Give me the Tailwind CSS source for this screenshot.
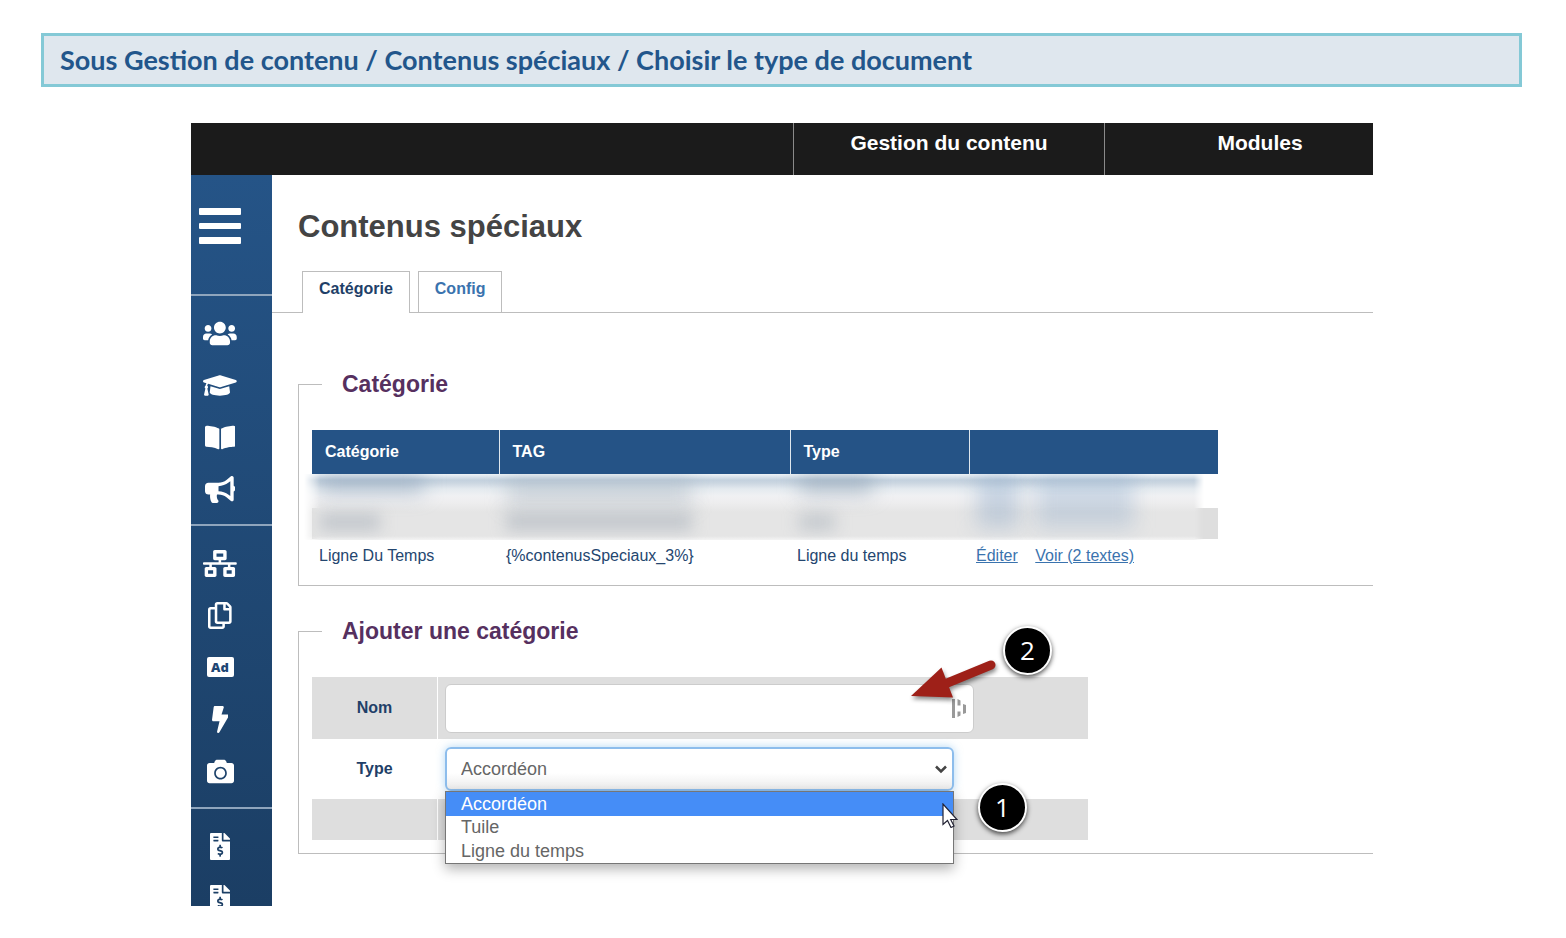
<!DOCTYPE html>
<html lang="fr">
<head>
    <meta charset="UTF-8">
    <meta name="viewport" content="width=device-width, initial-scale=1.0">
    <title>Contenus spéciaux</title>
    <script src="https://cdn.jsdelivr.net/npm/@tailwindcss/browser@4"></script>
</head>
<body class="bg-white font-['Liberation_Sans',Arial,sans-serif] text-base text-[#24466f] overflow-x-hidden">
    <h2 class="mt-[33px] ml-[41px] mr-[44px] h-[54px] flex items-center px-4 pb-px border-3 border-[#84c9d6] bg-[#dfe7ee] font-['Lato',sans-serif] font-bold text-[27px] leading-8 text-[#22568b] whitespace-nowrap">Sous Gestion de contenu / Contenus spéciaux / Choisir le type de document</h2>

    <div class="mt-9 ml-[191px] mr-[193px] overflow-hidden">
        <!-- Top bar -->
        <nav class="h-[52px] bg-[#1b1b1b] flex overflow-hidden pl-[602px] text-white font-bold text-[21px] leading-[40px] text-center">
            <a href="#" class="w-[311px] shrink-0 border-l border-[#8a8a8a]">Gestion du contenu</a>
            <a href="#" class="w-[311px] shrink-0 border-l border-[#8a8a8a]">Modules</a>
        </nav>

        <div class="flex">
            <!-- Sidebar -->
            <aside class="w-[81px] shrink-0 contain-size overflow-hidden bg-linear-to-b from-[#255487] to-[#1b3e64] text-white">
                <button type="button" aria-label="Menu" class="flex w-full h-[121px] pt-[33px] pl-2 border-b-2 border-[#8fa5bd]">
                    <svg class="w-[42px] h-9" viewBox="0 0 42 36" fill="currentColor">
                        <rect width="42" height="7" rx="1"/><rect y="15" width="42" height="6" rx="1"/><rect y="29" width="42" height="7" rx="1"/>
                    </svg>
                </button>
                <div class="pt-[11px] pb-[9px] border-b-2 border-[#8fa5bd]">
                    <a href="#" aria-label="Utilisateurs" class="flex w-[58px] h-[52px] items-center justify-center">
                        <svg class="h-[27px]" viewBox="0 0 640 512" fill="currentColor"><path d="M96 224c35.3 0 64-28.7 64-64s-28.7-64-64-64-64 28.7-64 64 28.7 64 64 64zm448 0c35.3 0 64-28.7 64-64s-28.7-64-64-64-64 28.7-64 64 28.7 64 64 64zm32 32h-64c-17.6 0-33.5 7.1-45.1 18.6 40.3 22.1 68.9 62 75.1 109.4h66c17.7 0 32-14.3 32-32v-32c0-35.3-28.7-64-64-64zm-256 0c61.9 0 112-50.1 112-112S381.9 32 320 32 208 82.1 208 144s50.1 112 112 112zm76.8 32h-8.3c-20.8 10-43.9 16-68.5 16s-47.6-6-68.5-16h-8.3C179.6 288 128 339.6 128 403.2V432c0 26.5 21.5 48 48 48h288c26.5 0 48-21.5 48-48v-28.8c0-63.6-51.6-115.2-115.2-115.2zm-223.7-13.4C161.5 263.1 145.6 256 128 256H64c-35.3 0-64 28.7-64 64v32c0 17.7 14.3 32 32 32h65.9c6.3-47.4 34.9-87.3 75.2-109.4z"/></svg>
                    </a>
                    <a href="#" aria-label="Formations" class="flex w-[58px] h-[52px] items-center justify-center">
                        <svg class="h-[27px]" viewBox="0 0 640 512" fill="currentColor"><path d="M622.34 153.2L343.4 67.5c-15.2-4.67-31.6-4.67-46.79 0L17.66 153.2c-23.54 7.23-23.54 38.36 0 45.59l48.63 14.94c-10.67 13.19-17.23 29.28-17.88 46.9C38.78 266.15 32 276.11 32 288c0 10.78 5.68 19.85 13.86 25.65L20.33 428.53C18.11 438.52 25.71 448 35.94 448h56.11c10.24 0 17.84-9.48 15.62-19.47L82.14 313.65C90.32 307.85 96 298.78 96 288c0-11.57-6.47-21.25-15.66-26.87.76-15.02 8.44-28.3 20.69-36.72L296.6 284.5c9.06 2.78 26.44 6.25 46.79 0l278.95-85.7c23.55-7.24 23.55-38.36 0-45.6zM352.79 315.09c-28.53 8.76-52.84 3.92-65.59 0l-145.02-44.55L128 384c0 35.35 85.96 64 192 64s192-28.65 192-64l-14.18-113.47-145.03 44.56z"/></svg>
                    </a>
                    <a href="#" aria-label="Lectures" class="flex w-[58px] h-[52px] items-center justify-center">
                        <svg class="h-[27px]" viewBox="0 0 576 512" fill="currentColor"><path d="M542.22 32.05c-54.8 3.11-163.72 14.43-230.96 55.59-4.64 2.84-7.27 7.89-7.27 13.17v363.87c0 11.55 12.63 18.85 23.28 13.49 69.18-34.82 169.23-44.32 218.7-46.92 16.89-.89 30.02-14.43 30.02-30.66V62.75c.01-17.71-15.35-31.74-33.77-30.7zM264.73 87.64C197.5 46.48 88.58 35.17 33.78 32.05 15.36 31.01 0 45.04 0 62.75V400.6c0 16.24 13.13 29.78 30.02 30.66 49.49 2.6 149.59 12.11 218.77 46.95 10.62 5.35 23.21-1.94 23.21-13.46V100.63c0-5.29-2.62-10.14-7.27-12.99z"/></svg>
                    </a>
                    <a href="#" aria-label="Annonces" class="flex w-[58px] h-[52px] items-center justify-center">
                        <svg class="h-[27px]" viewBox="0 0 576 512" fill="currentColor"><path d="M576 240c0-23.63-12.95-44.04-32-55.12V32.01C544 23.26 537.02 0 512 0c-7.12 0-14.19 2.38-19.98 7.02l-85.03 68.03C364.28 109.19 310.66 128 256 128H64c-35.35 0-64 28.65-64 64v96c0 35.35 28.65 64 64 64h33.7c-1.39 10.48-2.18 21.14-2.18 32 0 39.77 9.26 77.35 25.56 110.94 5.19 10.69 16.52 17.06 28.4 17.06h74.28c26.05 0 41.69-29.84 25.9-50.56-16.4-21.52-26.15-48.36-26.15-77.44 0-11.11 1.62-21.79 4.41-32H256c54.66 0 108.28 18.81 150.98 52.95l85.03 68.03a32.023 32.023 0 0 0 19.98 7.02c24.92 0 32-22.78 32-32V295.13C563.05 284.04 576 263.63 576 240zm-96 141.42l-33.05-26.44C392.95 311.78 325.12 288 256 288v-96c69.12 0 136.95-23.78 190.95-66.98L480 98.58v282.84z"/></svg>
                    </a>
                </div>
                <div class="pt-[11px] pb-[10px] border-b-2 border-[#8fa5bd]">
                    <a href="#" aria-label="Structure" class="flex w-[58px] h-[52px] items-center justify-center">
                        <svg class="h-[27px]" viewBox="0 0 640 512" fill="currentColor"><path d="M640 264v-16c0-8.84-7.16-16-16-16H344v-40h72c17.67 0 32-14.33 32-32V32c0-17.67-14.33-32-32-32H224c-17.67 0-32 14.33-32 32v128c0 17.67 14.33 32 32 32h72v40H16c-8.84 0-16 7.16-16 16v16c0 8.84 7.16 16 16 16h104v40H64c-17.67 0-32 14.33-32 32v128c0 17.67 14.33 32 32 32h160c17.67 0 32-14.33 32-32V352c0-17.67-14.33-32-32-32h-56v-40h304v40h-56c-17.67 0-32 14.33-32 32v128c0 17.67 14.33 32 32 32h160c17.67 0 32-14.33 32-32V352c0-17.67-14.33-32-32-32h-56v-40h104c8.84 0 16-7.16 16-16zM256 128V64h128v64H256zm-64 320H96v-64h96v64zm352 0h-96v-64h96v64z"/></svg>
                    </a>
                    <a href="#" aria-label="Pages" class="flex w-[58px] h-[52px] items-center justify-center">
                        <svg class="h-[27px]" viewBox="0 0 448 512" fill="currentColor"><path d="M433.941 65.941l-51.882-51.882A48 48 0 0 0 348.118 0H176c-26.51 0-48 21.49-48 48v48H48c-26.51 0-48 21.49-48 48v320c0 26.51 21.49 48 48 48h224c26.51 0 48-21.49 48-48v-48h80c26.51 0 48-21.49 48-48V99.882a48 48 0 0 0-14.059-33.941zM266 464H54a6 6 0 0 1-6-6V150a6 6 0 0 1 6-6h74v224c0 26.51 21.49 48 48 48h96v42a6 6 0 0 1-6 6zm128-96H182a6 6 0 0 1-6-6V54a6 6 0 0 1 6-6h106v88c0 13.255 10.745 24 24 24h88v202a6 6 0 0 1-6 6zm6-256h-64V48h9.632c1.591 0 3.117.632 4.243 1.757l48.368 48.368a6 6 0 0 1 1.757 4.243V112z"/></svg>
                    </a>
                    <a href="#" aria-label="Publicités" class="flex w-[58px] h-[52px] items-center justify-center">
                        <span class="w-[27px] h-5 rounded-xs bg-white text-[#1e4673] font-['Open_Sans',sans-serif] font-extrabold text-[13px] leading-5 text-center">Ad</span>
                    </a>
                    <a href="#" aria-label="Actions rapides" class="flex w-[58px] h-[52px] items-center justify-center">
                        <svg class="h-[27px]" viewBox="0 0 320 512" fill="currentColor"><path d="M296 160H180.6l42.6-129.8C227.2 15 215.7 0 200 0H56C44 0 33.8 8.9 32.2 20.8l-32 240C-1.7 275.2 9.5 288 24 288h118.7L96.6 482.5c-3.6 15.2 8 29.5 23.3 29.5 8.4 0 16.4-4.4 20.8-12l176-304c9.3-15.9-2.2-36-20.7-36z"/></svg>
                    </a>
                    <a href="#" aria-label="Photos" class="flex w-[58px] h-[52px] items-center justify-center">
                        <svg class="h-[27px]" viewBox="0 0 512 512" fill="currentColor"><path d="M512 144v288c0 26.5-21.5 48-48 48H48c-26.5 0-48-21.5-48-48V144c0-26.5 21.5-48 48-48h88l12.3-32.9c7-18.7 24.9-31.1 44.9-31.1h125.5c20 0 37.9 12.4 44.9 31.1L376 96h88c26.5 0 48 21.5 48 48zM376 288c0-66.2-53.8-120-120-120s-120 53.8-120 120 53.8 120 120 120 120-53.8 120-120zm-32 0c0 48.5-39.5 88-88 88s-88-39.5-88-88 39.5-88 88-88 88 39.5 88 88z"/></svg>
                    </a>
                </div>
                <div class="pt-[11px]">
                    <a href="#" aria-label="Factures" class="flex w-[58px] h-[52px] items-center justify-center">
                        <svg class="h-[27px]" viewBox="0 0 384 512" fill="currentColor"><path id="invoice" d="M377 105L279.1 7c-4.5-4.5-10.6-7-17-7H256v128h128v-6.1c0-6.3-2.5-12.4-7-16.9zm-153 31V0H24C10.7 0 0 10.7 0 24v464c0 13.3 10.7 24 24 24h336c13.3 0 24-10.7 24-24V160H248c-13.2 0-24-10.8-24-24zM64 72c0-4.42 3.58-8 8-8h80c4.42 0 8 3.58 8 8v16c0 4.42-3.58 8-8 8H72c-4.42 0-8-3.58-8-8V72zm0 80v-16c0-4.42 3.58-8 8-8h80c4.42 0 8 3.58 8 8v16c0 4.42-3.58 8-8 8H72c-4.42 0-8-3.58-8-8zm144 263.88V440c0 4.42-3.58 8-8 8h-16c-4.42 0-8-3.58-8-8v-24.29c-11.29-.58-22.27-4.52-31.37-11.35-3.9-2.93-4.1-8.77-.57-12.14l11.75-11.21c2.77-2.64 6.89-2.76 10.13-.73 3.87 2.42 8.26 3.72 12.82 3.72h28.11c6.5 0 11.8-5.92 11.8-13.19 0-5.95-3.61-11.19-8.77-12.73l-45-13.5c-18.59-5.58-31.58-23.42-31.58-43.39 0-24.52 19.05-44.44 42.67-45.07V232c0-4.42 3.58-8 8-8h16c4.42 0 8 3.58 8 8v24.29c11.29.58 22.27 4.51 31.37 11.35 3.9 2.93 4.1 8.77.57 12.14l-11.75 11.21c-2.77 2.64-6.89 2.76-10.13.73-3.87-2.43-8.26-3.72-12.82-3.72h-28.11c-6.5 0-11.8 5.92-11.8 13.19 0 5.95 3.61 11.19 8.77 12.73l45 13.5c18.59 5.58 31.58 23.42 31.58 43.39 0 24.53-19.05 44.44-42.67 45.07z"/></svg>
                    </a>
                    <a href="#" aria-label="Rapports" class="flex w-[58px] h-[52px] items-center justify-center">
                        <svg class="h-[27px]" viewBox="0 0 384 512" fill="currentColor"><use href="#invoice"/></svg>
                    </a>
                </div>
            </aside>

            <main class="flex-1 min-w-0 pt-8 pb-[52px]">
                <h1 class="pl-[26px] font-bold text-[31px] leading-10 text-[#444]">Contenus spéciaux</h1>

                <!-- Tabs -->
                <nav class="mt-6 pl-[30px] h-[42px] flex gap-2 border-b border-[#bdbdbd] font-bold">
                    <a href="#" class="h-[42px] px-4 pt-[5px] border border-b-0 border-[#bdbdbd] bg-white text-[#1f3f68]">Catégorie</a>
                    <a href="#" class="h-[41px] px-4 pt-[5px] border border-b-0 border-[#bdbdbd] text-[#3a73ae]">Config</a>
                </nav>

                <!-- Category list -->
                <fieldset class="mt-[57px] ml-[26px] pl-[13px] pb-[13px] min-w-0 border-t border-l border-b border-[#bdbdbd]">
                    <legend class="ml-[10px] pl-5 w-full bg-white font-bold text-[23px] leading-[28px] text-[#56305f]">Catégorie</legend>
                    <div class="relative mt-8 w-[906px]">
                        <table class="w-full table-fixed text-left">
                            <colgroup>
                                <col class="w-[187px]"><col class="w-[291px]"><col class="w-[179px]"><col class="w-[249px]">
                            </colgroup>
                            <thead>
                                <tr class="h-11 bg-[#255386] text-white">
                                    <th class="pl-[13px]">Catégorie</th>
                                    <th class="pl-[13px] border-l border-[#dfe7ee]">TAG</th>
                                    <th class="pl-[13px] border-l border-[#dfe7ee]">Type</th>
                                    <th class="border-l border-[#dfe7ee]"></th>
                                </tr>
                            </thead>
                            <tbody>
                                <tr class="h-[34px]"><td colspan="4"></td></tr>
                                <tr class="h-[31px] bg-[#dedede]"><td colspan="4"></td></tr>
                                <tr class="h-[33px]">
                                    <td class="pl-[7px]">Ligne Du Temps</td>
                                    <td class="pl-[7px]">{%contenusSpeciaux_3%}</td>
                                    <td class="pl-[7px]">Ligne du temps</td>
                                    <td class="pl-[7px] text-[#3a73ae]">
                                        <a href="#" class="mr-[13px] underline">Éditer</a>
                                        <a href="#" class="underline">Voir (2 textes)</a>
                                    </td>
                                </tr>
                            </tbody>
                        </table>
                        <!-- Masked rows -->
                        <div class="absolute -left-2 top-11 w-[900px] h-[66px] overflow-hidden bg-[linear-gradient(to_bottom,#eef3f7_0,#c3d1de_6px,#cbd6e1_9px,#e4eaef_15px,#f0f1f3_22px,#eeeeef_28px,#e5e5e5_38px,#e5e5e5_62px,#f4f4f4_66px)] [mask-image:linear-gradient(to_right,transparent,black_16px,black_calc(100%-10px),transparent)]">
                            <span class="absolute left-4 top-0 w-[104px] h-5 blur-[10px] bg-[#7790aa]/45"></span>
                            <span class="absolute left-4 top-10 w-[60px] h-4 blur-[8px] bg-[#9aa3b0]/50"></span>
                            <span class="absolute left-[202px] top-1 w-[186px] h-7 blur-[10px] bg-[#8fa0b0]/35"></span>
                            <span class="absolute left-[202px] top-10 w-[186px] h-4 blur-[8px] bg-[#9aa3b0]/50"></span>
                            <span class="absolute left-[495px] top-0 w-[74px] h-5 blur-[10px] bg-[#8195aa]/50"></span>
                            <span class="absolute left-[495px] top-10 w-9 h-4 blur-[8px] bg-[#9aa3b0]/45"></span>
                            <span class="absolute left-[673px] top-0 w-[42px] h-[54px] blur-[10px] bg-[#7d9fc4]/35"></span>
                            <span class="absolute left-[732px] top-0 w-[98px] h-[54px] blur-[10px] bg-[#7d9fc4]/30"></span>
                        </div>
                    </div>
                </fieldset>

                <!-- New category form -->
                <fieldset class="mt-[31px] ml-[26px] pl-[13px] pb-[13px] min-w-0 border-t border-l border-b border-[#bdbdbd]">
                    <legend class="ml-[10px] pl-5 w-full bg-white font-bold text-[23px] leading-[28px] text-[#56305f]">Ajouter une catégorie</legend>
                    <form class="relative mt-8 w-[776px]">
                        <div class="flex gap-px h-[62px]">
                            <label for="nom" class="w-[125px] flex items-center justify-center bg-[#dedede] font-bold text-[#1f3f68]">Nom</label>
                            <div class="flex-1 flex items-center pl-[7px] bg-[#dedede]">
                                <div class="relative w-[529px]">
                                    <input id="nom" type="text" class="block w-full h-[49px] px-4 text-lg rounded-md border border-[#ccc] bg-white">
                                    <svg class="absolute right-[7px] top-[15px] w-[15px] h-[19px]" viewBox="0 0 15 19" fill="#999"><path d="M0 0h3v19H0zM5.500 0l3 1.500v5h-3zM5.500 12.500h3v4l-3 1.500zM11 5l3 1v8l-3 1z"/></svg>
                                </div>
                            </div>
                        </div>
                        <div class="flex gap-px h-[60px]">
                            <label for="type" class="w-[125px] flex items-center justify-center font-bold text-[#1f3f68]">Type</label>
                            <div class="flex-1 pt-2 pl-[7px]">
                                <div class="relative w-[509px]">
                                    <select id="type" class="block w-full h-11 px-[14px] text-lg text-[#666] appearance-none rounded-md border-2 border-[#8dbdec] bg-linear-to-b from-white from-60% to-[#ececec] shadow-[0_0_9px_rgba(102,175,233,0.5)]">
                                        <option>Accordéon</option>
                                        <option>Tuile</option>
                                        <option>Ligne du temps</option>
                                    </select>
                                    <svg class="absolute right-[7px] top-[18px] w-3 h-[9px] pointer-events-none" viewBox="0 0 12 9" fill="none" stroke="#444" stroke-width="2.5"><path d="M1 1.5l5 5 5-5"/></svg>
                                    <!-- Opened list -->
                                    <ul role="listbox" aria-label="Type" class="absolute z-10 left-0 top-11 w-full border border-[#767676] bg-white text-lg leading-6 text-[#666] shadow-[0_5px_12px_rgba(0,0,0,0.3)]">
                                        <li role="option" aria-selected="true" class="px-[15px] leading-6 bg-[#458df7] text-white">Accordéon</li>
                                        <li role="option" class="px-[15px] leading-[23px]">Tuile</li>
                                        <li role="option" class="px-[15px] leading-6">Ligne du temps</li>
                                    </ul>
                                </div>
                            </div>
                        </div>
                        <div class="flex gap-px h-[41px]">
                            <div class="w-[125px] bg-[#dedede]"></div>
                            <div class="flex-1 bg-[#dedede]"></div>
                        </div>

                        <!-- Step markers, arrow and pointer -->
                        <span class="absolute left-[691px] -top-[51px] size-[49px] rounded-full border-2 border-white bg-black text-white font-['Open_Sans',sans-serif] text-[26px] leading-[45px] text-center shadow-[0_2px_5px_rgba(0,0,0,0.7)]">2</span>
                        <span class="absolute z-20 left-[666px] top-[106px] size-[49px] rounded-full border-2 border-white bg-black text-white font-['Open_Sans',sans-serif] text-[26px] leading-[45px] text-center shadow-[0_2px_5px_rgba(0,0,0,0.7)]">1</span>
                        <svg class="absolute left-[593px] -top-[22px] w-[95px] h-[50px] overflow-visible drop-shadow-[1px_3px_2px_rgba(0,0,0,0.45)]" viewBox="905 655 95 50">
                            <path d="M991 665L940 686" stroke="#9e2018" stroke-width="9" stroke-linecap="round"/>
                            <path d="M911 696L941.500 667.500L953 697.500z" fill="#9e2018"/>
                        </svg>
                        <svg class="absolute z-20 left-[630px] top-[126px] w-4 h-[25px]" viewBox="0 0 16 25"><path d="M1 1v20.500l4.500-4 3.500 7 3-1.500-3.300-6.500H15z" fill="#fff" stroke="#223" stroke-width="1.200"/></svg>
                    </form>
                </fieldset>
            </main>
        </div>
    </div>
</body>
</html>
